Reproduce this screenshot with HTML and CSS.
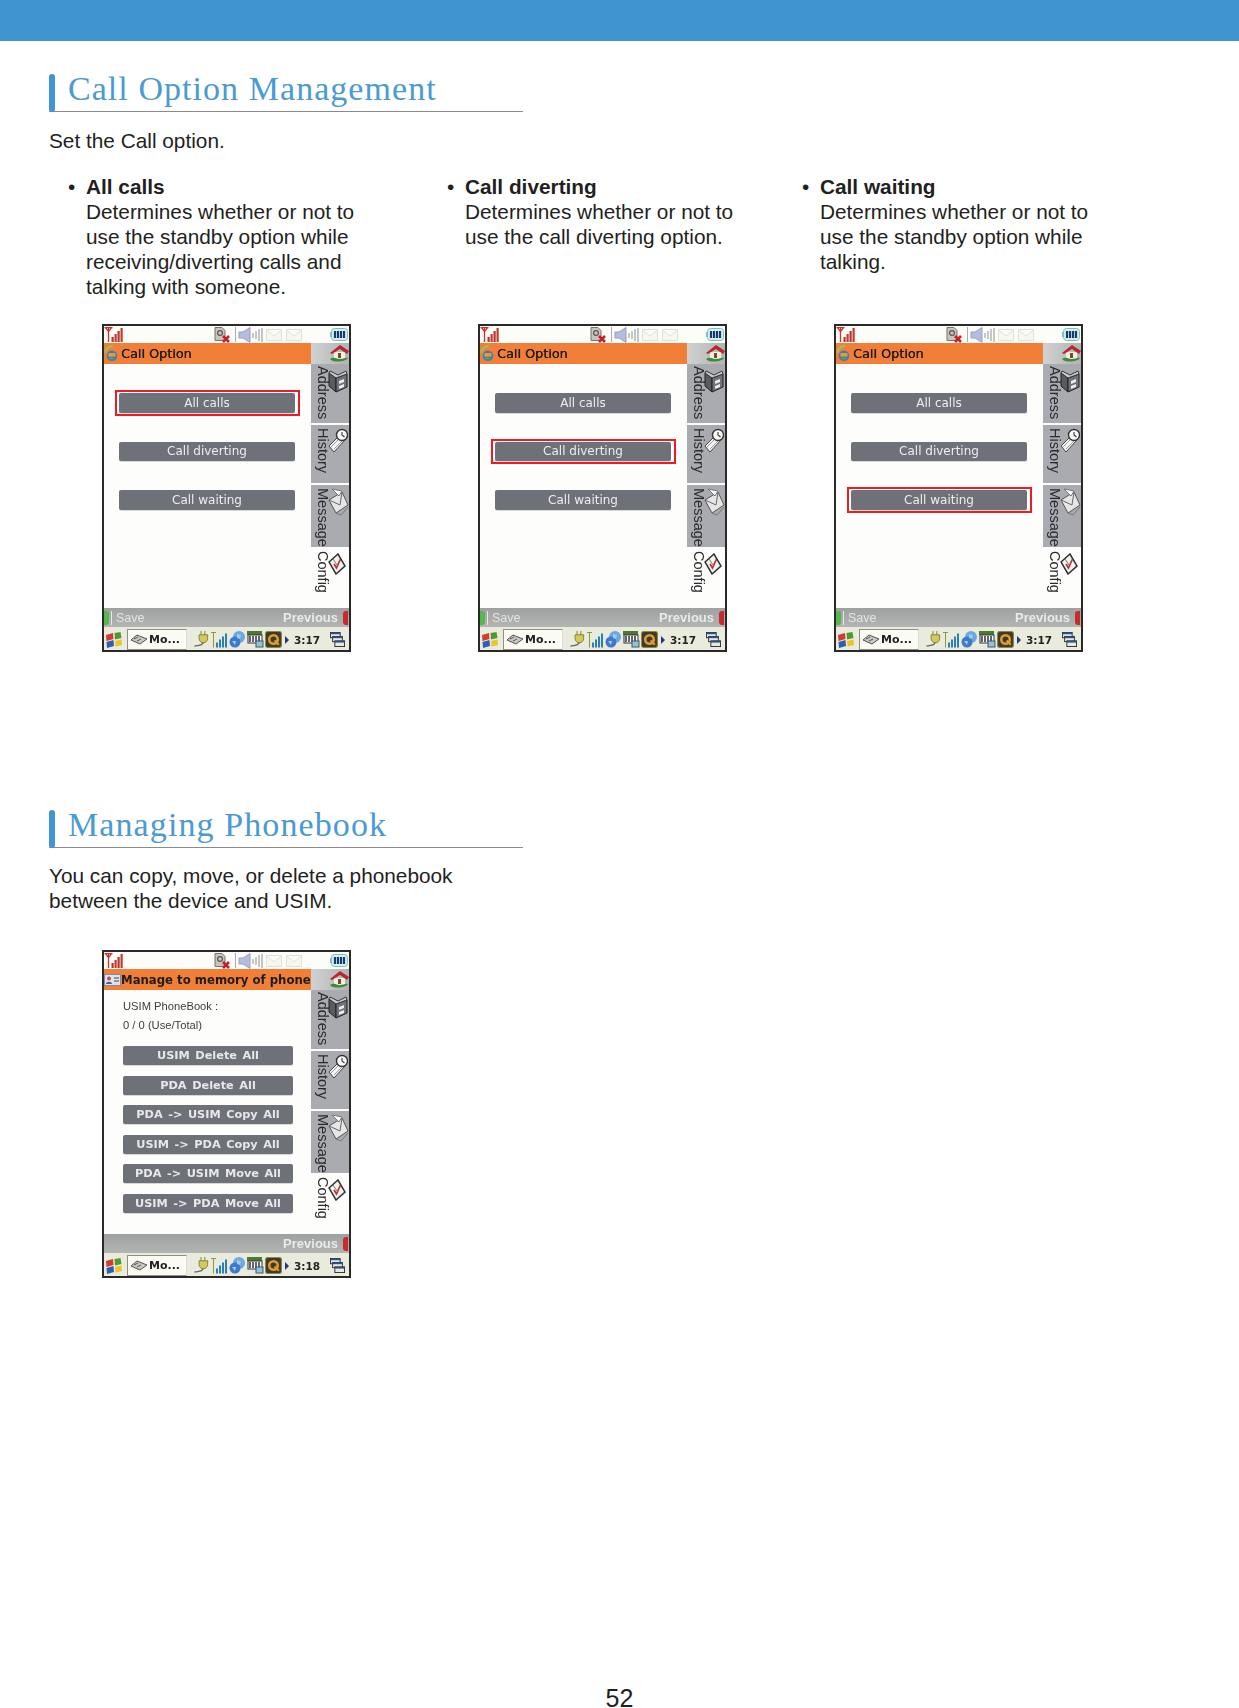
FILE: index.html
```html
<!DOCTYPE html>
<html lang="en">
<head>
<meta charset="utf-8">
<title>Call Option Management</title>
<link rel="stylesheet" href="styles.css">
</head>
<body>
<svg class="defs" width="0" height="0" aria-hidden="true">
  <symbol id="i-signal" viewBox="0 0 19 15">
    <path d="M0 .7h8M1 .7l3 4 3-4M4 .7V15" fill="none" stroke="#c8332f" stroke-width="1.3"/>
    <rect x="7" y="10" width="2.2" height="5" fill="#b5342d"/><rect x="10" y="7" width="2.2" height="8" fill="#c23a30"/><rect x="13" y="4" width="2.2" height="11" fill="#b5342d"/><rect x="16" y="1" width="2.2" height="14" fill="#c23a30"/>
  </symbol>
  <symbol id="i-sim" viewBox="0 0 17 16">
    <path d="M1 .5h7l3 3v10H1z" fill="#c9c5bd" stroke="#77736c"/><circle cx="6" cy="6" r="2.4" fill="none" stroke="#555" stroke-width="1.2"/>
    <path d="M9 9l6 6M15 9l-6 6" stroke="#c5202a" stroke-width="2.6"/>
  </symbol>
  <symbol id="i-speaker" viewBox="0 0 25 16">
    <path d="M1 5h4l7-4.500v15L5 11H1z" fill="#b3bde0" stroke="#a19dc0"/><path d="M15 6v5M18 4v8M21 2v12M24 1v14" stroke="#9aa5ac" stroke-width="1.2"/>
  </symbol>
  <symbol id="i-mail" viewBox="0 0 16 12">
    <path d="M.5.5h15v11H.5zM.5 1l7.500 6 7.500-6" fill="#f6f7f1" stroke="#e0e2da"/>
  </symbol>
  <symbol id="i-battery" viewBox="0 0 18 13">
    <rect x="1.500" y=".5" width="16" height="12" rx="3" fill="#d6f0ee" stroke="#7cc0b8"/><rect x="0" y="4" width="2" height="5" fill="#7cc0b8"/>
    <path d="M5 3v7M8 3v7M11 3v7M14 3v7" stroke="#183a74" stroke-width="2.2"/>
  </symbol>
  <symbol id="i-call" viewBox="0 0 17 19">
    <path d="M2 9C1 5 5 1 10 1" fill="none" stroke="#a7bb57" stroke-width="2.6"/><circle cx="9" cy="12" r="6" fill="#3d7fb5"/><path d="M5 9h8v4H5z" fill="#e49b3d"/><path d="M6 14h5v2H6z" fill="#6a9c4a"/>
  </symbol>
  <symbol id="i-card" viewBox="0 0 17 12">
    <rect x=".5" y=".5" width="16" height="11" fill="#dfe3ee" stroke="#7f8ba5"/><circle cx="5" cy="4.500" r="2" fill="#c34c3a"/><path d="M2 10c0-3 6-3 6 0z" fill="#3c5fa5"/><path d="M10 4h5M10 7h5" stroke="#445"/>
  </symbol>
  <symbol id="i-home" viewBox="0 0 20 17">
    <path d="M5 7h11v7H5z" fill="#f4f0e4"/><path d="M1 8L11 0l9 6-2 3-7-5-8 5z" fill="#b9272c"/><path d="M1 14c4-3 7 0 10 0s6-2 8-1c-2 4-15 5-18 1z" fill="#3f8a3a"/><rect x="9" y="8" width="3" height="5" fill="#7a4a2a"/>
  </symbol>
  <symbol id="i-address" viewBox="0 0 20 24">
    <path d="M1 4l7 5v14l-7-6z" fill="#595b5f" stroke="#1f2125"/><path d="M8 9l11-4v13L8 23z" fill="#70727a" stroke="#1f2125"/><path d="M2 2l8 4 8-4 1 3-11 4-7-5z" fill="#c9cacc" stroke="#33353a"/><path d="M11 12l5-2v3l-5 2zM11 17l5-2v3l-5 2z" fill="#ececec"/>
  </symbol>
  <symbol id="i-history" viewBox="0 0 20 25">
    <path d="M1 18l11-11 5 5-11 12z" fill="#f4f4f4" stroke="#444"/><path d="M3 19l9-9M6 21l8-8" stroke="#999"/><circle cx="14" cy="7" r="5.500" fill="#fafafa" stroke="#333" stroke-width="1.4"/><path d="M14 4v3l2.500 2" fill="none" stroke="#333" stroke-width="1.1"/>
  </symbol>
  <symbol id="i-message" viewBox="0 0 21 28">
    <path d="M1 12l13-8 6 13-12 8z" fill="#e6e6e6" stroke="#555"/><path d="M1 12l11 5 2-13" fill="none" stroke="#666"/><path d="M4 1l10 2-3 5z" fill="#fbfbfb" stroke="#777"/><path d="M8 25l5 2 7-8" fill="none" stroke="#777"/>
  </symbol>
  <symbol id="i-config" viewBox="0 0 18 22">
    <path d="M1 9l9-8 7 12-9 8z" fill="#f4f2ea" stroke="#2f3138" stroke-width="1.500"/><path d="M6 11l2.500 4 4-9" fill="none" stroke="#b0353c" stroke-width="1.700"/><path d="M5 6l4 6" stroke="#777"/>
  </symbol>
  <symbol id="i-flag" viewBox="0 0 17 18">
    <path d="M1 4l7-2 .5 6-7 2z" fill="#d63a2a"/><path d="M9.500 2l6-1 1 6-6.500 1.500z" fill="#4f9a35"/><path d="M1.500 11l7-2 .5 6-7 2z" fill="#2a5fb5"/><path d="M10 10l6.500-1.500L17 14l-6.500 1.500z" fill="#ecc42a"/>
  </symbol>
  <symbol id="i-device" viewBox="0 0 18 11">
    <path d="M1 6l6-5 10 4-7 5z" fill="#c9c9c4" stroke="#55554f"/><path d="M4 5l4-2M7 7l4-2" stroke="#55554f"/>
  </symbol>
  <symbol id="i-plug" viewBox="0 0 17 18">
    <path d="M8 0v4M12 0v4M6 4h9v4a4 4 0 0 1-9 0z" fill="#d2c95f" stroke="#85812e"/><path d="M10 12c0 4-5 3-9 4" fill="none" stroke="#666" stroke-width="1.400"/>
  </symbol>
  <symbol id="i-bars" viewBox="0 0 17 16">
    <path d="M0 1h5M2.500 1v15" stroke="#8a9a3a"/><rect x="5" y="11" width="2" height="5" fill="#2a7fb5"/><rect x="8" y="8" width="2" height="8" fill="#2a7fb5"/><rect x="11" y="5" width="2" height="11" fill="#2a7fb5"/><rect x="14" y="2" width="2" height="14" fill="#2a7fb5"/>
  </symbol>
  <symbol id="i-globe" viewBox="0 0 17 17">
    <circle cx="10" cy="6" r="6" fill="#6ba7e3"/><circle cx="6" cy="11" r="5.500" fill="#3f79cc"/><path d="M8 3l4 1-1 4-3-1zM3 10l4 0-1 4z" fill="#9ecdf2"/>
  </symbol>
  <symbol id="i-keys" viewBox="0 0 17 17">
    <rect x="0" y="0" width="15" height="4" fill="#4c7a32"/><rect x="1" y="4" width="14" height="8" fill="#fff" stroke="#333"/><path d="M3 5v6M6 5v6M9 5v6M12 5v6" stroke="#223" stroke-width="1.400"/><rect x="9" y="10" width="7" height="6" fill="#8fc3d5" stroke="#456"/>
  </symbol>
  <symbol id="i-q" viewBox="0 0 16 16">
    <rect x=".5" y=".5" width="15" height="15" rx="2" fill="#3d3a30" stroke="#8c8a3a"/><circle cx="8" cy="8" r="4" fill="none" stroke="#e49b2c" stroke-width="2.400"/><path d="M9 9l4 4" stroke="#e49b2c" stroke-width="2"/>
  </symbol>
  <symbol id="i-stack" viewBox="0 0 17 17">
    <rect x=".5" y=".5" width="11" height="6" fill="#e8e8e0" stroke="#222"/><rect x=".5" y=".5" width="11" height="2" fill="#2a4f8a"/><rect x="3" y="5" width="11" height="6" fill="#e8e8e0" stroke="#222"/><rect x="3" y="5" width="11" height="2" fill="#2a4f8a"/><rect x="5.500" y="10" width="11" height="6.500" fill="#e8e8e0" stroke="#222"/><rect x="5.500" y="10" width="11" height="2" fill="#2a4f8a"/>
  </symbol>
</svg>

<div class="page">
  <header class="topbar"></header>

  <section class="section first">
    <h1 class="heading"><span class="heading-bar"></span><span class="heading-text heading-one">Call Option Management</span></h1>
    <p class="intro">Set the Call option.</p>
    <div class="options">
      <div class="option"><span class="bullet">•</span><div><strong>All calls</strong><br>Determines whether or not to<br>use the standby option while<br>receiving/diverting calls and<br>talking with someone.</div></div>
      <div class="option"><span class="bullet">•</span><div><strong>Call diverting</strong><br>Determines whether or not to<br>use the call diverting option.</div></div>
      <div class="option"><span class="bullet">•</span><div><strong>Call waiting</strong><br>Determines whether or not to<br>use the standby option while<br>talking.</div></div>
    </div>
    <div class="phones">
      <div class="phone">
        <div class="status"><svg class="s-signal"><use href="#i-signal"/></svg><svg class="s-sim"><use href="#i-sim"/></svg><span class="s-sep"></span><svg class="s-speaker"><use href="#i-speaker"/></svg><svg class="s-mail"><use href="#i-mail"/></svg><svg class="s-mail"><use href="#i-mail"/></svg><svg class="s-battery"><use href="#i-battery"/></svg></div>
        <div class="main">
          <div class="content">
            <div class="title"><svg class="t-icon"><use href="#i-call"/></svg>Call Option</div>
            <div class="buttons"><div class="btn marked">All calls</div><div class="btn">Call diverting</div><div class="btn">Call waiting</div></div>
          </div>
          <div class="tabs"><div class="tab-home"><svg class="home"><use href="#i-home"/></svg></div><div class="tab tab-a"><span>Address</span><svg><use href="#i-address"/></svg></div><div class="tab tab-h"><span>History</span><svg><use href="#i-history"/></svg></div><div class="tab tab-m"><span>Message</span><svg><use href="#i-message"/></svg></div><div class="tab tab-c"><span>Config</span><svg><use href="#i-config"/></svg></div></div>
        </div>
        <div class="softbar"><span class="sb-green"></span><span class="sb-save">Save</span><span class="sb-prev">Previous</span><span class="sb-red"></span></div>
        <div class="taskbar"><svg class="k-flag"><use href="#i-flag"/></svg><div class="k-app"><svg><use href="#i-device"/></svg>Mo...</div><svg class="k-i k-first"><use href="#i-plug"/></svg><svg class="k-i"><use href="#i-bars"/></svg><svg class="k-i"><use href="#i-globe"/></svg><svg class="k-i"><use href="#i-keys"/></svg><svg class="k-i"><use href="#i-q"/></svg><span class="k-arrow"></span><span class="k-time">3:17</span><svg class="k-stack"><use href="#i-stack"/></svg></div>
      </div>

      <div class="phone">
        <div class="status"><svg class="s-signal"><use href="#i-signal"/></svg><svg class="s-sim"><use href="#i-sim"/></svg><span class="s-sep"></span><svg class="s-speaker"><use href="#i-speaker"/></svg><svg class="s-mail"><use href="#i-mail"/></svg><svg class="s-mail"><use href="#i-mail"/></svg><svg class="s-battery"><use href="#i-battery"/></svg></div>
        <div class="main">
          <div class="content">
            <div class="title"><svg class="t-icon"><use href="#i-call"/></svg>Call Option</div>
            <div class="buttons"><div class="btn">All calls</div><div class="btn marked">Call diverting</div><div class="btn">Call waiting</div></div>
          </div>
          <div class="tabs"><div class="tab-home"><svg class="home"><use href="#i-home"/></svg></div><div class="tab tab-a"><span>Address</span><svg><use href="#i-address"/></svg></div><div class="tab tab-h"><span>History</span><svg><use href="#i-history"/></svg></div><div class="tab tab-m"><span>Message</span><svg><use href="#i-message"/></svg></div><div class="tab tab-c"><span>Config</span><svg><use href="#i-config"/></svg></div></div>
        </div>
        <div class="softbar"><span class="sb-green"></span><span class="sb-save">Save</span><span class="sb-prev">Previous</span><span class="sb-red"></span></div>
        <div class="taskbar"><svg class="k-flag"><use href="#i-flag"/></svg><div class="k-app"><svg><use href="#i-device"/></svg>Mo...</div><svg class="k-i k-first"><use href="#i-plug"/></svg><svg class="k-i"><use href="#i-bars"/></svg><svg class="k-i"><use href="#i-globe"/></svg><svg class="k-i"><use href="#i-keys"/></svg><svg class="k-i"><use href="#i-q"/></svg><span class="k-arrow"></span><span class="k-time">3:17</span><svg class="k-stack"><use href="#i-stack"/></svg></div>
      </div>

      <div class="phone">
        <div class="status"><svg class="s-signal"><use href="#i-signal"/></svg><svg class="s-sim"><use href="#i-sim"/></svg><span class="s-sep"></span><svg class="s-speaker"><use href="#i-speaker"/></svg><svg class="s-mail"><use href="#i-mail"/></svg><svg class="s-mail"><use href="#i-mail"/></svg><svg class="s-battery"><use href="#i-battery"/></svg></div>
        <div class="main">
          <div class="content">
            <div class="title"><svg class="t-icon"><use href="#i-call"/></svg>Call Option</div>
            <div class="buttons"><div class="btn">All calls</div><div class="btn">Call diverting</div><div class="btn marked">Call waiting</div></div>
          </div>
          <div class="tabs"><div class="tab-home"><svg class="home"><use href="#i-home"/></svg></div><div class="tab tab-a"><span>Address</span><svg><use href="#i-address"/></svg></div><div class="tab tab-h"><span>History</span><svg><use href="#i-history"/></svg></div><div class="tab tab-m"><span>Message</span><svg><use href="#i-message"/></svg></div><div class="tab tab-c"><span>Config</span><svg><use href="#i-config"/></svg></div></div>
        </div>
        <div class="softbar"><span class="sb-green"></span><span class="sb-save">Save</span><span class="sb-prev">Previous</span><span class="sb-red"></span></div>
        <div class="taskbar"><svg class="k-flag"><use href="#i-flag"/></svg><div class="k-app"><svg><use href="#i-device"/></svg>Mo...</div><svg class="k-i k-first"><use href="#i-plug"/></svg><svg class="k-i"><use href="#i-bars"/></svg><svg class="k-i"><use href="#i-globe"/></svg><svg class="k-i"><use href="#i-keys"/></svg><svg class="k-i"><use href="#i-q"/></svg><span class="k-arrow"></span><span class="k-time">3:17</span><svg class="k-stack"><use href="#i-stack"/></svg></div>
      </div>
    </div>
  </section>

  <section class="section second">
    <h1 class="heading"><span class="heading-bar"></span><span class="heading-text heading-two">Managing Phonebook</span></h1>
    <p class="intro">You can copy, move, or delete a phonebook<br>between the device and USIM.</p>
    <div class="phones phones-single">
      <div class="phone">
        <div class="status"><svg class="s-signal"><use href="#i-signal"/></svg><svg class="s-sim"><use href="#i-sim"/></svg><span class="s-sep"></span><svg class="s-speaker"><use href="#i-speaker"/></svg><svg class="s-mail"><use href="#i-mail"/></svg><svg class="s-mail"><use href="#i-mail"/></svg><svg class="s-battery"><use href="#i-battery"/></svg></div>
        <div class="main">
          <div class="content">
            <div class="title title-bold"><svg class="t-card"><use href="#i-card"/></svg>Manage to memory of phone</div>
            <div class="memory"><div>USIM PhoneBook :</div><div>0 / 0 (Use/Total)</div></div>
            <div class="buttons buttons-dense">
              <div class="btn">USIM Delete All</div><div class="btn">PDA Delete All</div><div class="btn">PDA -&gt; USIM Copy All</div><div class="btn">USIM -&gt; PDA Copy All</div><div class="btn">PDA -&gt; USIM Move All</div><div class="btn">USIM -&gt; PDA Move All</div>
            </div>
          </div>
          <div class="tabs"><div class="tab-home"><svg class="home"><use href="#i-home"/></svg></div><div class="tab tab-a"><span>Address</span><svg><use href="#i-address"/></svg></div><div class="tab tab-h"><span>History</span><svg><use href="#i-history"/></svg></div><div class="tab tab-m"><span>Message</span><svg><use href="#i-message"/></svg></div><div class="tab tab-c"><span>Config</span><svg><use href="#i-config"/></svg></div></div>
        </div>
        <div class="softbar"><span class="sb-prev">Previous</span><span class="sb-red"></span></div>
        <div class="taskbar"><svg class="k-flag"><use href="#i-flag"/></svg><div class="k-app"><svg><use href="#i-device"/></svg>Mo...</div><svg class="k-i k-first"><use href="#i-plug"/></svg><svg class="k-i"><use href="#i-bars"/></svg><svg class="k-i"><use href="#i-globe"/></svg><svg class="k-i"><use href="#i-keys"/></svg><svg class="k-i"><use href="#i-q"/></svg><span class="k-arrow"></span><span class="k-time">3:18</span><svg class="k-stack"><use href="#i-stack"/></svg></div>
      </div>
    </div>
  </section>

  <footer class="pageno">52</footer>
</div>
</body>
</html>
```

FILE: styles.css
```css
* { box-sizing: border-box; }
html, body { margin: 0; padding: 0; background: #fff; }
body { height: 1708px; overflow: hidden; font-family: "Liberation Sans", Arial, sans-serif; color: #231f20; }
.defs { position: absolute; }
.page { height: 1708px; display: flex; flex-direction: column; overflow: hidden; }
.topbar { height: 41px; background: #4095d0; flex: none; }

.section { padding-left: 49px; flex: none; }
.first { margin-top: 33px; }
.second { margin-top: 158px; }

.heading { width: 474px; height: 38px; margin: 0; display: flex; border-bottom: 1px solid #8a8a8a; font-weight: normal; }
.heading-bar { width: 6px; height: 38px; flex: none; background: #4095d0; border-radius: 3px; }
.heading-text { margin-left: 13px; font-family: "Liberation Serif", serif; font-size: 34px; line-height: 30px; color: #4a9ad3; }
.heading-one { letter-spacing: 1.05px; }
.heading-two { letter-spacing: 1.1px; }

.intro { margin: 16px 0 0; font-size: 20.8px; line-height: 25px; }
.second .intro { margin-top: 15px; }

.options { display: grid; grid-template-columns: 379px 355px 300px; margin: 21px 0 0 19px; font-size: 20.8px; line-height: 25px; }
.option { display: flex; height: 125px; }
.bullet { width: 18px; flex: none; }
.option strong { font-weight: bold; }

.phones { display: grid; grid-template-columns: 249px 377px 356px; margin: 25px 0 0 53px; }
.phones .phone:nth-child(2) { margin-left: 127px; }
.phones .phone:nth-child(3) { margin-left: 106px; }
.phones-single { margin-top: 37px; }

.phone { width: 249px; height: 328px; border: 2px solid #2a2829; background: #fdfdfb; display: flex; flex-direction: column; font-family: "DejaVu Sans", sans-serif; overflow: hidden; filter: blur(.3px); }

.status { height: 17px; flex: none; display: flex; align-items: center; background: #fcfcf8; }
.status svg { display: block; }
.s-signal { width: 20px; height: 15px; }
.s-sim { width: 17px; height: 16px; margin-left: 90px; }
.s-sep { width: 1px; height: 15px; background: #aab; margin-left: 4px; }
.s-speaker { width: 25px; height: 16px; margin-left: 2px; }
.s-mail { width: 16px; height: 12px; margin-left: 3px; }
.s-mail + .s-mail { margin-left: 4px; }
.s-battery { width: 18px; height: 13px; margin-left: auto; margin-right: 1px; }

.main { flex: 1; display: flex; min-height: 0; }
.content { width: 207px; flex: none; display: flex; flex-direction: column; }
.title { height: 21px; flex: none; display: flex; align-items: center; background: #f17f38; color: #1d1c18; font-size: 12.8px; white-space: nowrap; text-shadow: .3px 0 #1d1c18; }
.t-icon { width: 15px; height: 19px; margin-right: 2px; flex: none; }
.t-card { width: 17px; height: 12px; flex: none; }
.title-bold { font-weight: bold; font-size: 11.7px; text-shadow: none; }

.buttons { display: flex; flex-direction: column; gap: 29px; padding: 29px 16px 0 15px; }
.btn { height: 19.5px; display: flex; align-items: center; justify-content: center; background: #6e7177; border-radius: 2px; color: #eceef0; font-size: 12px; white-space: nowrap; position: relative; box-shadow: 0 1px 0 #d8d8d8; }
.marked::after { content: ""; position: absolute; top: -3px; bottom: -3px; left: -4px; right: -5px; border: 2px solid #ed1c24; }

.memory { padding: 7px 0 0 19px; font-family: "Liberation Sans", sans-serif; font-size: 11.2px; line-height: 19px; color: #3c3c3c; height: 56px; flex: none; }
.buttons-dense { gap: 10.5px; padding: 0 18px 0 19px; }
.buttons-dense .btn { height: 19px; font-weight: bold; font-size: 11.3px; word-spacing: 1.6px; color: #e6e8ea; }

.tabs { flex: 1; display: flex; flex-direction: column; padding-right: 2px; }
.tab-home { height: 21px; flex: none; display: flex; justify-content: flex-end; align-items: center; background: linear-gradient(90deg, #d0d2d2, #b2b4b4); }
.home { width: 20px; height: 17px; flex: none; }
.tab { display: flex; margin-bottom: 2px; padding-left: 5px; flex: none; }
.tab span { writing-mode: vertical-rl; width: 14px; font-family: "Liberation Sans", sans-serif; font-size: 14.5px; line-height: 14px; color: #2a2a2c; white-space: nowrap; flex: none; }
.tab svg { flex: none; margin-left: -2px; }
.tab-a { height: 59px; background: #a9abb0; padding-top: 2px; }
.tab-a svg { width: 20px; height: 24px; margin-top: 3px; }
.tab-h { height: 58px; background: #a9abb0; padding-top: 3px; }
.tab-h svg { width: 20px; height: 25px; }
.tab-m { height: 62px; background: #a9abb0; padding-top: 3px; margin-bottom: 0; }
.tab-m svg { width: 21px; height: 28px; }
.tab-c { height: 50px; margin-top: 1px; padding-top: 3px; }
.tab-c svg { width: 18px; height: 22px; margin-top: 2px; }

.softbar { height: 19px; flex: none; display: flex; align-items: center; background: linear-gradient(#9fa1a0, #b3b5b3); font-family: "Liberation Sans", sans-serif; font-size: 12.5px; color: #e2e4e3; }
.sb-green { width: 5px; height: 14px; background: #57b54d; border-radius: 0 3px 3px 0; }
.sb-save { margin-left: 2px; padding-left: 4px; border-left: 1px solid #e8e8e8; }
.sb-prev { margin-left: auto; font-size: 13px; font-weight: bold; color: #e9ebea; }
.sb-red { width: 5px; height: 14px; margin: 0 1px 0 5px; background: #c92a2a; border-radius: 3px 0 0 3px; }

.taskbar { height: 23px; flex: none; display: flex; align-items: center; background: #e9ebdc; padding: 2px 0 0 1px; }
.taskbar svg { flex: none; display: block; }
.k-flag { width: 17px; height: 18px; }
.k-app { width: 60px; height: 21px; flex: none; margin-left: 5px; display: flex; align-items: center; gap: 1px; background: #fbfbf4; border: 1px solid #8f8f85; border-right-color: #ddd; font-size: 11px; font-weight: bold; color: #222; }
.k-app svg { width: 18px; height: 11px; margin-left: 2px; }
.k-i { width: 17px; height: 17px; margin-left: 1px; }
.k-first { margin-left: 6px; }
.k-arrow { width: 0; height: 0; margin-left: 3px; border-left: 4px solid #23397c; border-top: 4px solid transparent; border-bottom: 4px solid transparent; }
.k-time { margin-left: 5px; font-size: 10.5px; font-weight: bold; color: #232323; }
.k-stack { width: 15px; height: 17px; margin-left: auto; margin-right: 4px; }

.pageno { margin-top: auto; height: 20px; line-height: 20px; font-size: 25px; text-align: center; color: #231f20; flex: none; }
```
